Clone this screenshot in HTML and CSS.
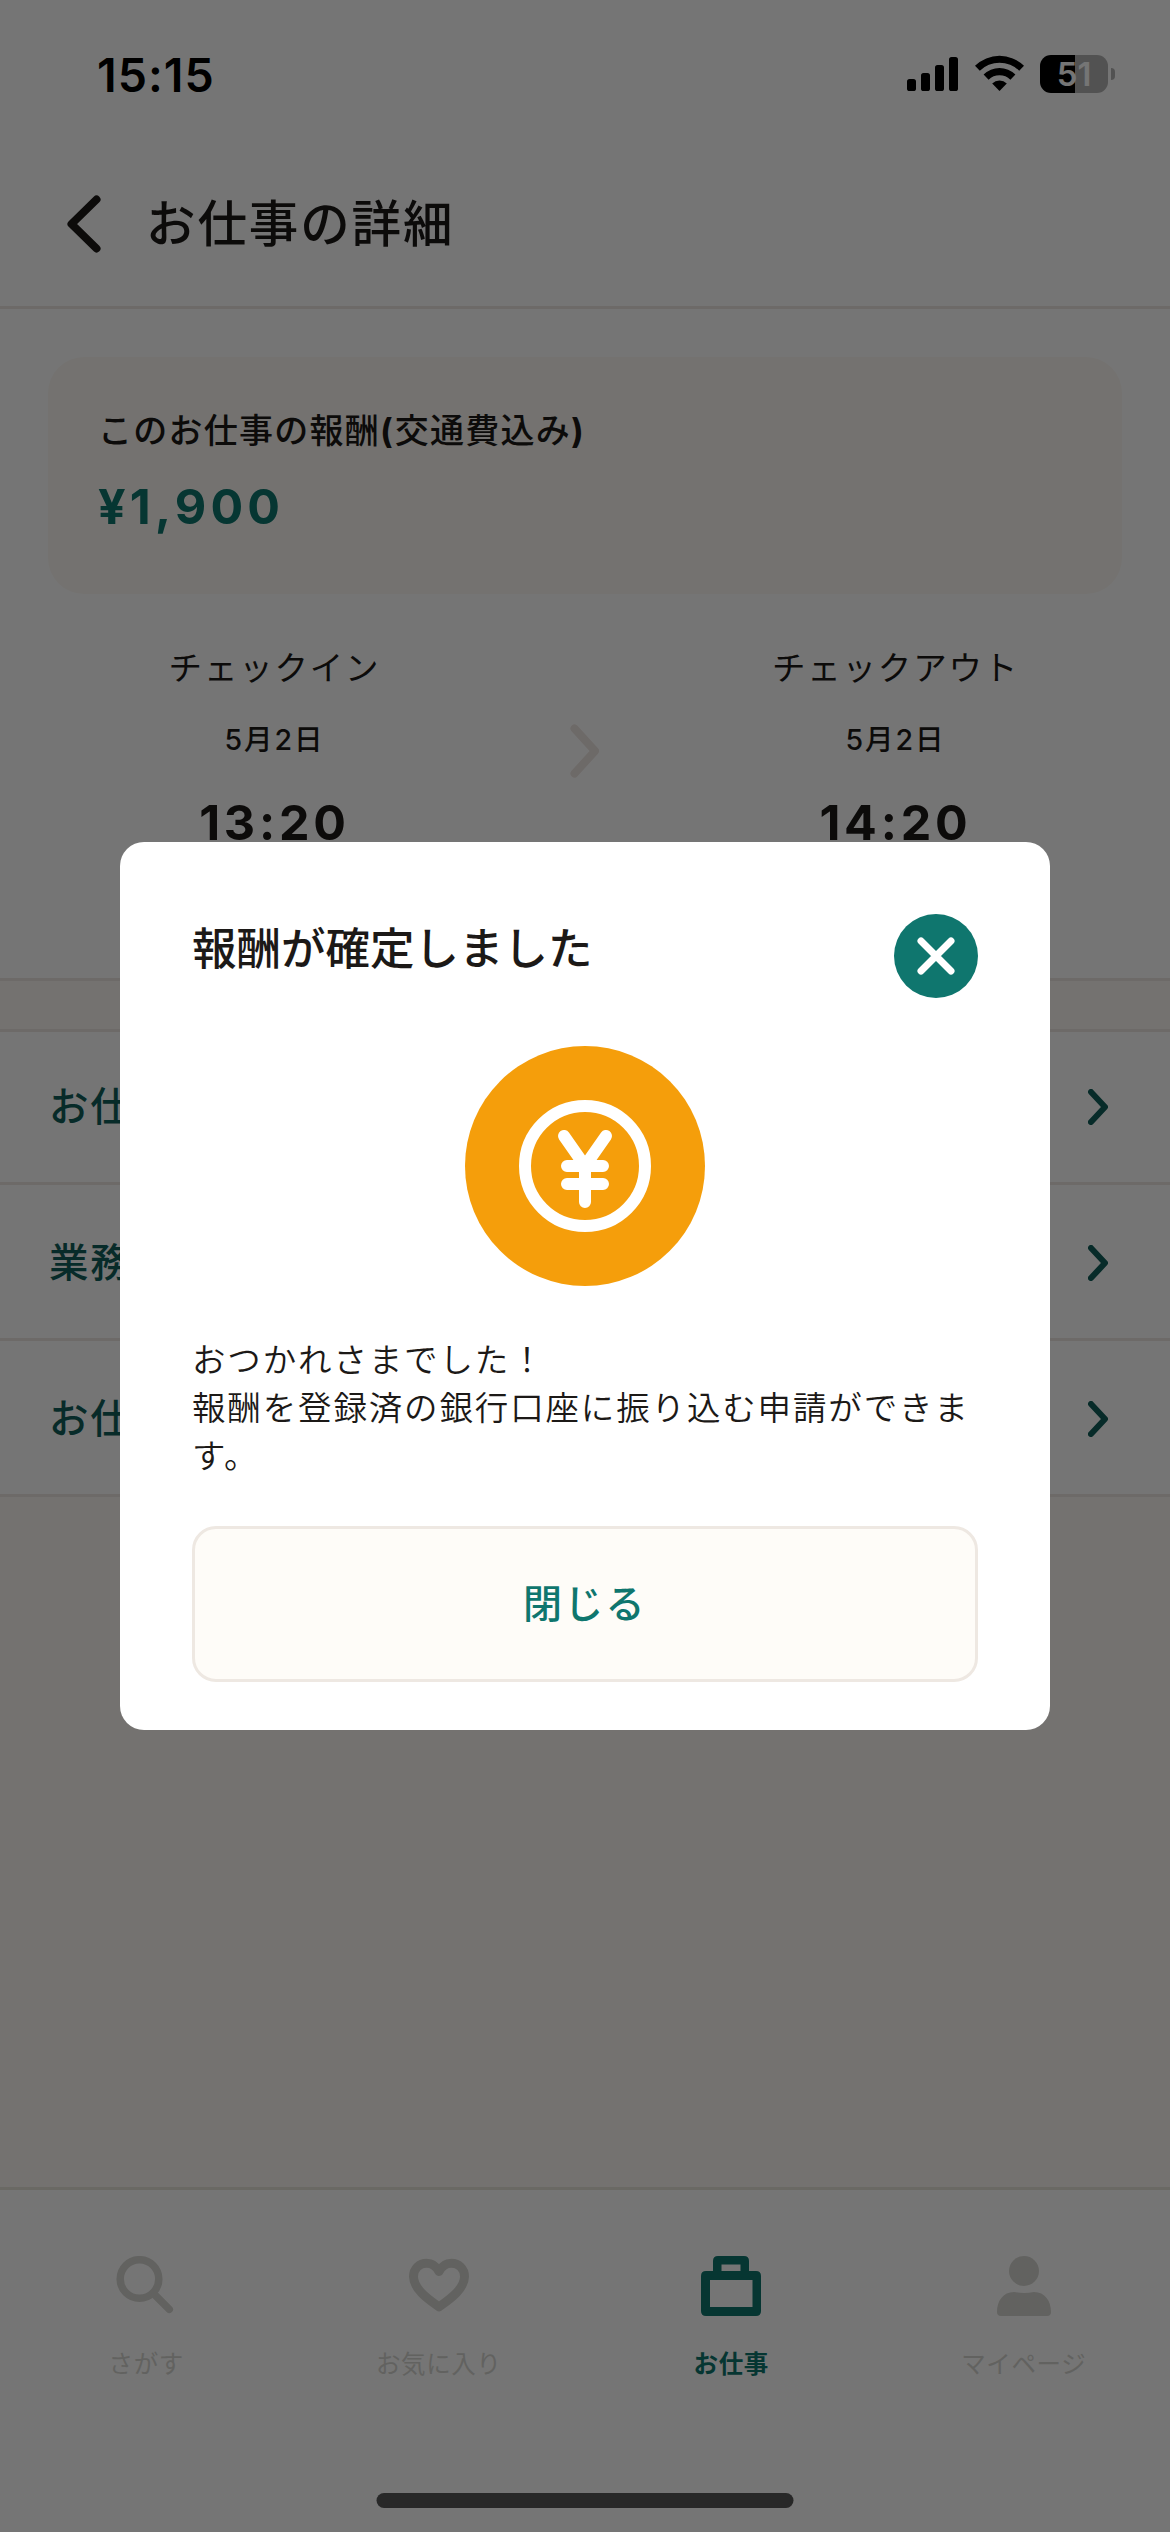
FILE: index.html
```html
<!DOCTYPE html>
<html lang="ja">
<head>
<meta charset="utf-8">
<title>お仕事の詳細</title>
<link rel="stylesheet" href="styles.css">
</head>
<body>
<div class="screen">
  <div class="status">
    <span class="clock">15:15</span>
    <div class="indicators">
      <svg class="signal" width="51" height="34" viewBox="0 0 51 34"><rect x="0" y="22" width="9" height="12" rx="2.6"/><rect x="14" y="16" width="9" height="18" rx="2.6"/><rect x="28" y="8" width="9" height="26" rx="2.6"/><rect x="42" y="0" width="9" height="34" rx="2.6"/></svg>
      <svg class="wifi" width="49" height="36" viewBox="0 0 49 36"><path d="M0 10.8A35 35 0 0 1 49 10.8L44.200 15.800A28 28 0 0 0 4.800 15.800Z"/><path d="M8.600 19.600A22.500 22.500 0 0 1 40.400 19.600L35.400 24.800A15.500 15.500 0 0 0 13.600 24.800Z"/><path d="M17.200 28.500A10.300 10.300 0 0 1 31.800 28.500L24.500 36Z"/></svg>
      <div class="battery"><span class="level">51</span><span class="cap"></span></div>
    </div>
  </div>

  <header class="header">
    <svg class="back" width="34" height="58" viewBox="0 0 34 58"><path d="M29.500 4.500L4.500 29L29.500 53.500"/></svg>
    <h1 class="title">お仕事の詳細</h1>
  </header>

  <main class="content">
    <section class="summary">
      <div class="reward">
        <div class="reward-label">このお仕事の報酬<span class="paren">(</span>交通費込み<span class="paren">)</span></div>
        <div class="reward-amount">¥1,900</div>
      </div>
      <div class="times">
        <div class="time-col"><div class="time-label">チェックイン</div><div class="date">5月2日</div><div class="time">13:20</div></div>
        <svg class="arrow" width="30" height="54" viewBox="0 0 30 54"><path d="M4.500 4.500L25 27L4.500 49.500"/></svg>
        <div class="time-col"><div class="time-label">チェックアウト</div><div class="date">5月2日</div><div class="time">14:20</div></div>
      </div>
    </section>
    <nav class="links">
      <a class="link"><span>お仕</span><svg width="20" height="36" viewBox="0 0 20 36"><path d="M3 3L17 18L3 33"/></svg></a>
      <a class="link"><span>業務</span><svg width="20" height="36" viewBox="0 0 20 36"><path d="M3 3L17 18L3 33"/></svg></a>
      <a class="link"><span>お仕</span><svg width="20" height="36" viewBox="0 0 20 36"><path d="M3 3L17 18L3 33"/></svg></a>
    </nav>
  </main>

  <footer class="tabs">
    <div class="tab"><svg width="60" height="60" viewBox="0 0 60 60"><g class="line" stroke-width="7.500"><circle cx="23.500" cy="23" r="19.300"/><path d="M37.500 37.500L53.300 53.300"/></g></svg><span>さがす</span></div>
    <div class="tab"><svg width="60" height="60" viewBox="0 0 60 60"><path class="line" stroke-width="9" d="M30 50.800C22 45 4.500 34 4.500 20.500C4.500 12.500 10.500 7.200 17.500 7.200C23.500 7.200 27.500 10.500 30 15.500C32.500 10.500 36.500 7.200 42.500 7.200C49.500 7.200 55.500 12.500 55.500 20.500C55.500 34 38 45 30 50.800Z"/></svg><span>お気に入り</span></div>
    <div class="tab active"><svg width="60" height="60" viewBox="0 0 60 60"><path class="fill" fill-rule="evenodd" d="M17 0H43Q48 0 48 5V15H55Q60 15 60 20V55Q60 60 55 60H5Q0 60 0 55V20Q0 15 5 15H12V5Q12 0 17 0ZM20.500 8.500V15H39.500V8.500ZM9 24V51H51.500V24Z"/></svg><span>お仕事</span></div>
    <div class="tab"><svg width="60" height="60" viewBox="0 0 60 60"><g class="fill"><circle cx="30" cy="15" r="15"/><path d="M20 36Q30 38 40 36C51 36 57 45 57 56Q57 60 53 60H7Q3 60 3 56C3 45 9 36 20 36Z"/></g></svg><span>マイページ</span></div>
  </footer>

  <div class="overlay">
    <div class="dialog">
      <div class="dialog-head">
        <h2 class="dialog-title">報酬が確定しました</h2>
        <svg class="close" width="84" height="84" viewBox="0 0 84 84"><circle cx="42" cy="42" r="42"/><path d="M27 27L57 57M57 27L27 57"/></svg>
      </div>
      <svg class="coin" width="240" height="240" viewBox="0 0 240 240"><circle class="disc" cx="120" cy="120" r="120"/><g><circle cx="120" cy="120" r="60"/><path d="M99 90L120 120L141 90M120 120V156M102 120H138M102 138H138"/></g></svg>
      <p class="message">おつかれさまでした！<br>報酬を登録済の銀行口座に振り込む申請ができます。</p>
      <div class="button">閉じる</div>
    </div>
    <div class="home-bar"></div>
  </div>
</div>
</body>
</html>
```
FILE: styles.css
```css
* { box-sizing: border-box; }

body {
  margin: 0;
  background: #fff;
  color: #1c1917;
  font-family: Inter, "Noto Sans CJK JP", sans-serif;
}

h1, h2, p { margin: 0; }

svg { display: block; flex: none; }

.screen {
  position: relative;
  display: flex;
  flex-direction: column;
  width: 1170px;
  height: 2532px;
  overflow: hidden;
}

.status {
  display: flex;
  justify-content: space-between;
  height: 141px;
  padding: 49px 55px 0 97px;
  color: #000;
}

.clock {
  font-size: 46.5px;
  font-weight: 600;
  line-height: 52px;
  letter-spacing: 1px;
}

.indicators { display: flex; align-items: flex-start; }
.signal { margin-top: 8px; }
.wifi { margin: 6px 16px 0 17px; }

.battery { display: flex; align-items: center; gap: 3px; height: 38px; margin-top: 6px; }

.level {
  width: 68px;
  border-radius: 11px;
  background: linear-gradient(to right, #000 35px, #b3b3b3 35px);
  color: #fff;
  font-size: 33px;
  font-weight: 600;
  line-height: 38px;
  text-align: center;
}

.cap { width: 4px; height: 12px; border-radius: 0 6px 6px 0; background: #b3b3b3; }

.header {
  display: flex;
  align-items: center;
  height: 168px;
  padding-left: 67px;
  border-bottom: 3px solid #eee6e2;
}

.back, .arrow, .link svg { fill: none; stroke: #1c1917; stroke-linecap: round; stroke-linejoin: round; }
.back { stroke-width: 8px; }

.title {
  margin-left: 45px;
  font-size: 49.5px;
  font-weight: 500;
  line-height: 62px;
  letter-spacing: 1.9px;
}

.content { flex: 1; background: #fcf9f5; }

.summary {
  height: 672px;
  padding: 48px;
  border-bottom: 3px solid #eee6e2;
  background: #fff;
}

.reward { height: 237px; padding: 48px 48px 48px 50px; border-radius: 36px; background: #fcf9f5; }

.reward-label {
  font-size: 34px;
  font-weight: 500;
  line-height: 52px;
  letter-spacing: 1.25px;
}

.paren { font-weight: 700; letter-spacing: 2px; }

.reward-amount {
  margin-top: 15px;
  color: #0f766e;
  font-size: 48.5px;
  font-weight: 650;
  line-height: 70px;
  letter-spacing: 4.2px;
}

.times { display: flex; align-items: center; justify-content: space-between; margin-top: 48px; }
.time-col { width: 453px; text-align: center; }
.arrow { stroke: #eee6e2; stroke-width: 8px; }

.time-label { font-size: 33.5px; font-weight: 400; line-height: 52px; letter-spacing: 1.8px; }
.date { margin-top: 25px; font-size: 28.5px; font-weight: 500; line-height: 42px; letter-spacing: 2px; }
.time { margin-top: 26px; font-size: 48.5px; font-weight: 650; line-height: 72px; letter-spacing: 3.8px; }

.links { margin-top: 48px; border-top: 3px solid #eee6e2; background: #fff; }

.link {
  display: flex;
  align-items: center;
  justify-content: space-between;
  height: 156px;
  padding: 3px 62px 0 49px;
  border-bottom: 3px solid #eee6e2;
  color: #115e59;
  font-size: 39.5px;
  font-weight: 500;
  line-height: 50px;
  letter-spacing: 1.75px;
}

.link:first-child { height: 153px; padding-top: 0; }
.link svg { stroke: #115e59; stroke-width: 6px; }

.tabs {
  display: flex;
  height: 345px;
  padding-top: 66px;
  border-top: 3px solid #e6e4da;
}

.tab {
  display: flex;
  flex: 1;
  flex-direction: column;
  align-items: center;
  gap: 30px;
  color: #d6d6d1;
  font-size: 24.5px;
  font-weight: 400;
  line-height: 36px;
  letter-spacing: .6px;
}

.tab.active { color: #0f766e; font-weight: 700; }
.tab .fill { fill: currentColor; }
.tab .line { fill: none; stroke: currentColor; stroke-linecap: round; stroke-linejoin: round; }

.overlay {
  position: absolute;
  inset: 0;
  background: rgba(0, 0, 0, .54);
}

.dialog {
  width: 930px;
  height: 888px;
  margin: 841.5px auto 0;
  padding: 72px 72px 48px;
  border-radius: 24px;
  background: #fff;
}

.dialog-head { display: flex; justify-content: space-between; }

.dialog-title { font-size: 44.5px; font-weight: 500; line-height: 70px; }

.close { fill: #0f766e; }
.close path { stroke: #fff; stroke-width: 7px; stroke-linecap: round; }

.coin { margin: 48px auto 0; }
.coin .disc { fill: #f59e0b; }
.coin g { fill: none; stroke: #fff; stroke-width: 12px; stroke-linecap: round; stroke-linejoin: round; }

.message {
  margin-top: 50px;
  font-size: 33.5px;
  font-weight: 350;
  line-height: 48px;
  letter-spacing: 1.85px;
  word-break: break-all;
}

.button {
  height: 156px;
  margin-top: 46px;
  border: 3px solid #eee8e2;
  border-radius: 24px;
  background: #fefcf8;
  color: #0f766e;
  font-size: 39px;
  font-weight: 500;
  line-height: 150px;
  letter-spacing: 2.25px;
  text-align: center;
}

.home-bar {
  position: absolute;
  bottom: 24px;
  left: 50%;
  width: 417px;
  height: 15px;
  border-radius: 8px;
  background: #282828;
  transform: translateX(-50%);
}
```
